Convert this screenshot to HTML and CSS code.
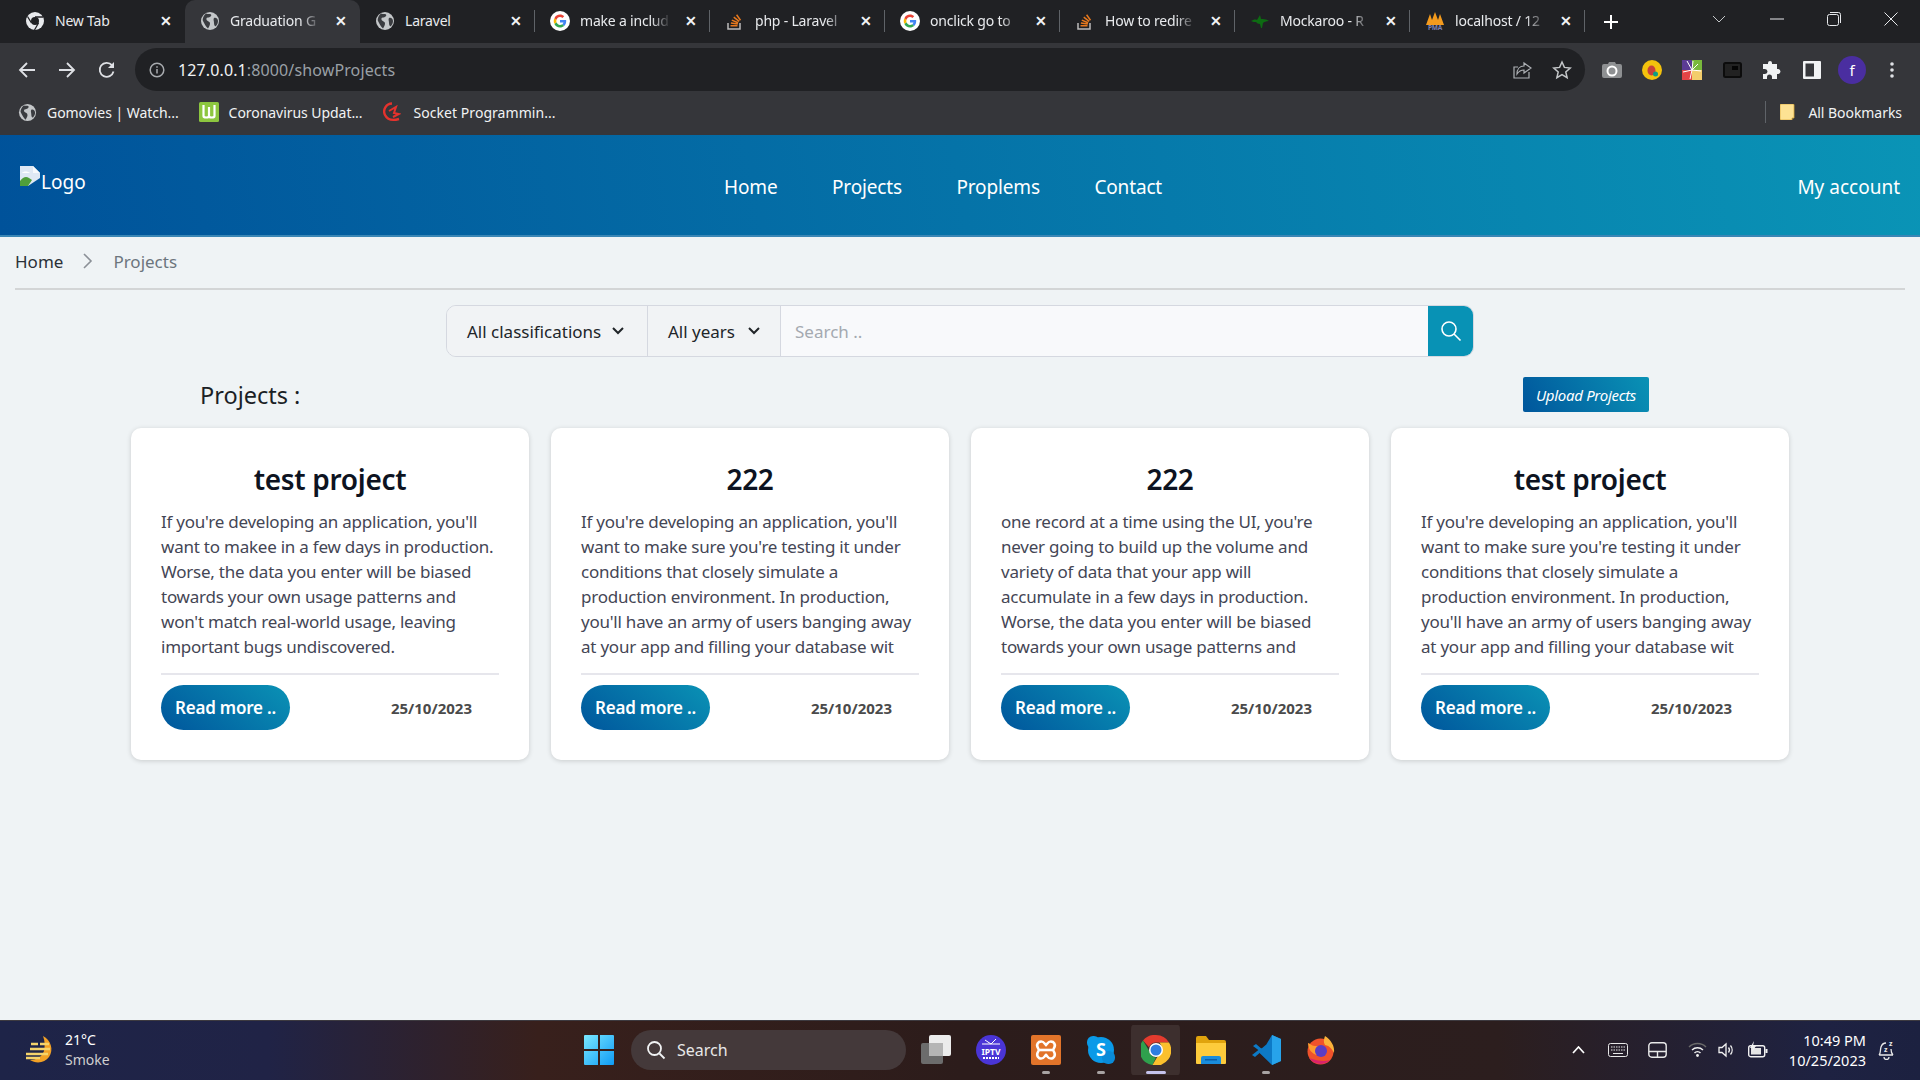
FILE: index.html
```html
<!DOCTYPE html>
<html lang="en">
<head>
    <meta charset="UTF-8">
    <meta name="viewport" content="width=device-width, initial-scale=1.0">
    <title>Projects</title>
    <link rel="stylesheet" href="styles.css">
</head>
<body>

    <svg class="sprites" width="0" height="0">
        <symbol id="globe" viewBox="0 0 20 20">
            <circle cx="10" cy="10" r="9" fill="#c4c7c9"/>
            <path d="M6 2.500c2 1 4 0 5 1s-1 3-3 3-2 2-1 3 3 1 3 3-1 3-2 5C6 16 4 12 3 10s1-6 3-7.500zM14 7c2-1 4 1 4 3s-1 4-2 5-2-1-2-3-1-4 0-5z" fill="#3a3c40"/>
        </symbol>
        <symbol id="google" viewBox="0 0 20 20">
            <circle cx="10" cy="10" r="10" fill="#fff"/>
            <path d="M16.200 10.200c0-.5 0-.9-.1-1.300H10v2.500h3.500c-.2.800-.6 1.500-1.300 1.900l2 1.600c1.200-1.100 2-2.800 2-4.700z" fill="#4285f4"/>
            <path d="M10 16.400c1.700 0 3.100-.6 4.200-1.500l-2-1.600c-.6.400-1.300.6-2.200.6-1.700 0-3-1.100-3.500-2.600l-2.100 1.600c1 2.100 3.100 3.500 5.600 3.500z" fill="#34a853"/>
            <path d="M6.500 11.300c-.3-.8-.3-1.700 0-2.500L4.400 7.200c-.9 1.700-.9 3.900 0 5.600z" fill="#fbbc05"/>
            <path d="M10 6.100c.9 0 1.800.3 2.400.9l1.800-1.800C13.100 4.200 11.700 3.600 10 3.600c-2.500 0-4.600 1.400-5.600 3.600l2.100 1.600C7 7.300 8.300 6.100 10 6.100z" fill="#ea4335"/>
        </symbol>
        <symbol id="stack" viewBox="0 0 20 20">
            <path d="M3 12v6h12v-6" fill="none" stroke="#bcbbbb" stroke-width="1.500"/>
            <path d="M5.500 15.500h7v-1.500h-7zM5.800 12.700l6.900 1 .2-1.500-6.900-1zM6.500 9.800l6.300 2.700.6-1.400-6.300-2.700zM8.300 6.800l5.400 4.200.9-1.200-5.400-4.200zM11 4.200l3.900 5.500 1.200-.9L12.200 3.300z" fill="#e8791e"/>
        </symbol>
    </svg>

    <div class="tab-strip">
        <div class="tab">
            <svg class="fav" width="20" height="20" viewBox="0 0 20 20"><circle cx="10" cy="10" r="9" fill="#e8eaed"/><circle cx="10" cy="10" r="4" fill="#202124"/><path d="M10 6h8M6.500 12L2.500 5.500M13.500 12L9.500 19" stroke="#202124" stroke-width="1.300"/></svg>
            <span class="tab-title">New Tab</span><span class="tab-x">✕</span>
        </div>
        <div class="tab tab-active">
            <svg class="fav" width="20" height="20"><use href="#globe"/></svg>
            <span class="tab-title fade">Graduation G</span><span class="tab-x">✕</span>
        </div>
        <div class="tab sep">
            <svg class="fav" width="20" height="20"><use href="#globe"/></svg>
            <span class="tab-title">Laravel</span><span class="tab-x">✕</span>
        </div>
        <div class="tab sep">
            <svg class="fav" width="20" height="20"><use href="#google"/></svg>
            <span class="tab-title fade">make a includ</span><span class="tab-x">✕</span>
        </div>
        <div class="tab sep">
            <svg class="fav" width="20" height="20"><use href="#stack"/></svg>
            <span class="tab-title fade">php - Laravel</span><span class="tab-x">✕</span>
        </div>
        <div class="tab sep">
            <svg class="fav" width="20" height="20"><use href="#google"/></svg>
            <span class="tab-title fade">onclick go to</span><span class="tab-x">✕</span>
        </div>
        <div class="tab sep">
            <svg class="fav" width="20" height="20"><use href="#stack"/></svg>
            <span class="tab-title fade">How to redire</span><span class="tab-x">✕</span>
        </div>
        <div class="tab sep">
            <svg class="fav" width="20" height="20" viewBox="0 0 20 20"><path d="M1 10c2-1 4-2 6-1l3-5 1 4c2 0 5 0 8 2-3 0-5 1-6 2l-1 5h-1l-1-4c-2 0-3-1-4-2-2 0-3 0-5-1z" fill="#0d6b12"/></svg>
            <span class="tab-title fade">Mockaroo - R</span><span class="tab-x">✕</span>
        </div>
        <div class="tab sep">
            <svg class="fav" width="20" height="20" viewBox="0 0 20 20"><path d="M1 14L5 3l2 6 3-8 3 8 2-6 4 11z" fill="#f39a1d"/><text x="10" y="18.500" class="pma-text">PMA</text></svg>
            <span class="tab-title fade">localhost / 12</span><span class="tab-x">✕</span>
        </div>
        <svg class="new-tab" width="18" height="18" viewBox="0 0 18 18"><path d="M9 2v14M2 9h14" stroke="#fff" stroke-width="2"/></svg>
        <div class="win-controls">
            <svg class="win-chevron" width="14" height="8" viewBox="0 0 14 8"><path d="M1 1l6 6 6-6" fill="none" stroke="#c4c7c9"/></svg>
            <svg width="14" height="14" viewBox="0 0 14 14"><path d="M0 7h14" stroke="#e8eaed"/></svg>
            <svg width="14" height="14" viewBox="0 0 14 14"><rect x=".5" y="2.500" width="11" height="11" rx="2" fill="none" stroke="#e8eaed"/><path d="M3 .5h8.500a2 2 0 0 1 2 2V11" fill="none" stroke="#e8eaed"/></svg>
            <svg width="14" height="14" viewBox="0 0 14 14"><path d="M.5.5l13 13M13.500.5l-13 13" stroke="#e8eaed"/></svg>
        </div>
    </div>

    <div class="toolbar">
        <div class="tool"><svg width="18" height="18" viewBox="0 0 18 18"><path d="M17 9H2M9 2L2 9l7 7" fill="none" stroke="#dfe1e5" stroke-width="1.800"/></svg></div>
        <div class="tool"><svg width="18" height="18" viewBox="0 0 18 18"><path d="M1 9h15M9 2l7 7-7 7" fill="none" stroke="#dfe1e5" stroke-width="1.800"/></svg></div>
        <div class="tool"><svg width="18" height="18" viewBox="0 0 18 18"><path d="M15.500 10.500A7 7 0 1 1 14 4.200" fill="none" stroke="#dfe1e5" stroke-width="1.800"/><path d="M16 1v6h-6z" fill="#dfe1e5"/></svg></div>
        <div class="address">
            <svg class="addr-info" width="16" height="16" viewBox="0 0 16 16"><circle cx="8" cy="8" r="6.800" fill="none" stroke="#a8abaf" stroke-width="1.500"/><path d="M8 7v4.500M8 4.200v1.600" stroke="#a8abaf" stroke-width="1.500"/></svg>
            <span class="url"><b>127.0.0.1</b>:8000/showProjects</span>
            <div class="tool"><svg width="20" height="20" viewBox="0 0 20 20"><path d="M17 12v6H2V7h4" fill="none" stroke="#aeb1b5" stroke-width="1.200"/><path d="M12 3l7 5-7 5v-3c-3 0-5 1-7 4 0-5 3-8 7-8z" fill="none" stroke="#aeb1b5" stroke-width="1.200"/></svg></div>
            <div class="tool"><svg width="20" height="20" viewBox="0 0 20 20"><path d="M10 2l2.400 5.400 5.800.6-4.400 3.900 1.300 5.800L10 14.700l-5.100 3 1.300-5.800L1.800 8l5.800-.6z" fill="none" stroke="#c4c7c9" stroke-width="1.500"/></svg></div>
        </div>
        <div class="extensions">
            <div class="tool"><svg width="20" height="18" viewBox="0 0 20 18"><path d="M2 3h4l1-2h6l1 2h4a2 2 0 0 1 2 2v10a2 2 0 0 1-2 2H2a2 2 0 0 1-2-2V5a2 2 0 0 1 2-2z" fill="#8e9092"/><circle cx="10" cy="10" r="4.500" fill="none" stroke="#fff" stroke-width="2"/></svg></div>
            <div class="tool"><svg width="20" height="20" viewBox="0 0 20 20"><circle cx="10" cy="10" r="10" fill="#f4c20d"/><ellipse cx="9.500" cy="10.500" rx="4" ry="5" fill="#c8423a"/><circle cx="13.500" cy="14" r="2.500" fill="#0f9d83"/></svg></div>
            <div class="tool"><svg width="20" height="20" viewBox="0 0 20 20"><rect width="10" height="10" fill="#5b3b94"/><rect x="10" width="10" height="10" fill="#79b93c"/><rect y="10" width="10" height="10" fill="#e34546"/><rect x="10" y="10" width="10" height="10" fill="#f3cd6b"/><path d="M10 10L5 1M10 10l1-9M10 10l6-6M10 10l-9 2M10 10l9 1M10 10l-2 9" stroke="#fff"/></svg></div>
            <div class="tool"><svg width="19" height="16" viewBox="0 0 19 16"><rect x="1" y="1" width="17" height="14" rx="1.500" fill="#222" stroke="#0c0c0c" stroke-width="2"/><rect x="9" y="4" width="6" height="4" fill="#050505"/></svg></div>
            <div class="tool"><svg width="20" height="20" viewBox="0 0 20 20"><path d="M8 1a2 2 0 0 1 2 2v1h5v5h1a2.500 2.500 0 0 1 0 5h-1v5H10v-2a2.500 2.500 0 0 0-5 0v2H1v-5h2a2.500 2.500 0 0 0 0-5H1V4h5V3a2 2 0 0 1 2-2z" fill="#f1f3f4"/></svg></div>
            <div class="tool"><svg width="18" height="18" viewBox="0 0 18 18"><rect width="18" height="18" rx="1" fill="#f1f3f4"/><rect x="2.500" y="2.500" width="8.500" height="13" fill="#35363a"/></svg></div>
            <div class="tool"><span class="avatar">f</span></div>
            <div class="tool"><svg width="4" height="16" viewBox="0 0 4 16"><circle cx="2" cy="2" r="1.800" fill="#dfe1e5"/><circle cx="2" cy="8" r="1.800" fill="#dfe1e5"/><circle cx="2" cy="14" r="1.800" fill="#dfe1e5"/></svg></div>
        </div>
    </div>

    <div class="bookmarks">
        <div class="bookmark"><svg width="19" height="19"><use href="#globe"/></svg>Gomovies | Watch...</div>
        <div class="bookmark"><svg width="20" height="20" viewBox="0 0 20 20"><rect width="20" height="20" rx="1.500" fill="#8cc63f"/><path d="M4.500 3v11c0 2 5.500 2 5.500 0V5m0 9c0 2 5.500 2 5.500 0V3" fill="none" stroke="#fff" stroke-width="2.200"/></svg>Coronavirus Updat...</div>
        <div class="bookmark wide"><svg width="18" height="20" viewBox="0 0 18 20"><path d="M9 1.500a8 8 0 0 0-7 11.500c2 4 7 6 14 4" fill="none" stroke="#e5322d" stroke-width="2.400"/><path d="M6 9l7-4-2 6 5 1-6 3" fill="none" stroke="#e5322d" stroke-width="2"/></svg>Socket Programmin...</div>
        <div class="all-bookmarks">
            <svg width="15" height="16" viewBox="0 0 15 16"><path d="M0 1a1 1 0 0 1 1-1h12a1 1 0 0 1 1 1v13h-2v2H1a1 1 0 0 1-1-1z" fill="#fde293" stroke="#d9a93a" stroke-width=".8"/></svg>All Bookmarks
        </div>
    </div>

    <header class="site-header">
        <a class="logo"><svg width="20" height="20" viewBox="0 0 20 20"><path d="M0 0h13l7 7v5L8 20H0z" fill="#dfe8f4"/><path d="M13 0v7h7z" fill="#f7f9fc"/><path d="M2 7c1-2 6-2 8 0z" fill="#fff"/><path d="M0 20v-5c3-4 6-5 9-3l3 2-4 6z" fill="#4f9e3a"/></svg><span class="logo-alt">Logo</span></a>
        <nav class="main-nav">
            <a>Home</a>
            <a>Projects</a>
            <a>Proplems</a>
            <a>Contact</a>
        </nav>
        <a class="account">My account</a>
    </header>

    <main class="content">
        <div class="breadcrumb">
            <span class="crumb-home">Home</span>
            <svg width="12" height="16" viewBox="0 0 12 16"><path d="M2 1l7 7-7 7" fill="none" stroke="#8b9097" stroke-width="1.600"/></svg>
            <span class="crumb-current">Projects</span>
        </div>

        <div class="search-bar">
            <div class="filter filter-class">All classifications
                <svg width="12" height="8" viewBox="0 0 12 8"><path d="M1 1l5 5 5-5" fill="none" stroke="#212529" stroke-width="2"/></svg>
            </div>
            <div class="filter filter-year">All years
                <svg width="12" height="8" viewBox="0 0 12 8"><path d="M1 1l5 5 5-5" fill="none" stroke="#212529" stroke-width="2"/></svg>
            </div>
            <div class="search-input">Search ..</div>
            <div class="search-btn"><svg width="22" height="22" viewBox="0 0 22 22"><circle cx="9" cy="9" r="7" fill="none" stroke="#fff" stroke-width="1.600"/><path d="M14 14l6.500 6.500" stroke="#fff" stroke-width="1.600"/></svg></div>
        </div>

        <div class="projects-head">
            <h2>Projects :</h2>
            <a class="upload-btn">Upload Projects</a>
        </div>

        <div class="cards">
            <div class="card">
                <h3>test project</h3>
                <p>If you're developing an application, you'll<br>want to makee in a few days in production.<br>Worse, the data you enter will be biased<br>towards your own usage patterns and<br>won't match real-world usage, leaving<br>important bugs undiscovered.</p>
                <div class="card-foot"><a class="read-more">Read more ..</a><span class="date">25/10/2023</span></div>
            </div>
            <div class="card">
                <h3>222</h3>
                <p>If you're developing an application, you'll<br>want to make sure you're testing it under<br>conditions that closely simulate a<br>production environment. In production,<br>you'll have an army of users banging away<br>at your app and filling your database wit</p>
                <div class="card-foot"><a class="read-more">Read more ..</a><span class="date">25/10/2023</span></div>
            </div>
            <div class="card">
                <h3>222</h3>
                <p>one record at a time using the UI, you're<br>never going to build up the volume and<br>variety of data that your app will<br>accumulate in a few days in production.<br>Worse, the data you enter will be biased<br>towards your own usage patterns and</p>
                <div class="card-foot"><a class="read-more">Read more ..</a><span class="date">25/10/2023</span></div>
            </div>
            <div class="card">
                <h3>test project</h3>
                <p>If you're developing an application, you'll<br>want to make sure you're testing it under<br>conditions that closely simulate a<br>production environment. In production,<br>you'll have an army of users banging away<br>at your app and filling your database wit</p>
                <div class="card-foot"><a class="read-more">Read more ..</a><span class="date">25/10/2023</span></div>
            </div>
        </div>
    </main>

    <footer class="taskbar">
        <div class="weather">
            <svg width="30" height="30" viewBox="0 0 30 30"><path d="M18 1c8 4 11 14 6 21-4 6-13 7-19 3 6 0 12-3 14-9 1-5 1-10-1-15z" fill="#f2a125"/><path d="M6 9h7M15 9h9M1 19h22M5 14h20M1 23h14" stroke="#f5d36b" stroke-width="2.500"/></svg>
            <div class="weather-text"><span class="temp">21°C</span><span class="sky">Smoke</span></div>
        </div>
        <div class="task-center">
            <svg class="start" width="30" height="30" viewBox="0 0 30 30"><defs><linearGradient id="win" x1="0" y1="0" x2="1" y2="1"><stop offset="0" stop-color="#7ae8ff"/><stop offset="1" stop-color="#0f9bf5"/></linearGradient></defs><path d="M0 1a1 1 0 0 1 1-1h13v14H0zM16 0h13a1 1 0 0 1 1 1v13H16zM0 16h14v14H1a1 1 0 0 1-1-1zM16 16h14v13a1 1 0 0 1-1 1H16z" fill="url(#win)"/></svg>
            <div class="task-search">
                <svg width="20" height="20" viewBox="0 0 20 20"><circle cx="8.500" cy="8.500" r="6.500" fill="none" stroke="#f1f3f4" stroke-width="1.800"/><path d="M13.500 13.500l5 5" stroke="#f1f3f4" stroke-width="1.800"/></svg>
                <span>Search</span>
            </div>
            <div class="task-icon"><svg width="30" height="30" viewBox="0 0 30 30"><rect y="8" width="22" height="21" rx="2" fill="#6c6c6c"/><rect x="8" width="22" height="21" rx="2" fill="#ececec"/><rect x="8" y="8" width="14" height="13" fill="#b5b5b5"/></svg></div>
            <div class="task-icon"><svg width="30" height="30" viewBox="0 0 30 30"><circle cx="15" cy="15" r="15" fill="#4a35d6"/><path d="M9 5l6 4 5-5M6 9h18" stroke="#fff" fill="none"/><text x="15" y="20" class="iptv-text">IPTV</text><path d="M7 23h16" stroke="#fff" stroke-width="2" stroke-dasharray="2 1"/></svg></div>
            <div class="task-icon running"><svg width="30" height="30" viewBox="0 0 30 30"><rect width="30" height="30" rx="2" fill="#e2742a"/><path d="M8 7c4-2 5 1 7 3 2-2 3-5 7-3 4 3 1 6 0 8 1 2 4 5 0 8-4 2-5-1-7-3-2 2-3 5-7 3-4-3-1-6 0-8-1-2-4-5 0-8z" fill="none" stroke="#fff" stroke-width="2.600"/><path d="M9 15h12" stroke="#fff" stroke-width="2.600"/></svg></div>
            <div class="task-icon running"><svg width="28" height="28" viewBox="0 0 28 28"><circle cx="14" cy="14" r="13" fill="#0a9ae8"/><rect x="0" y="0" width="13" height="13" rx="6" fill="#0a9ae8"/><rect x="15" y="15" width="13" height="13" rx="6" fill="#0a8bd8"/><text x="14" y="20" class="skype-text">S</text></svg></div>
            <div class="task-icon active"><svg width="30" height="30" viewBox="0 0 30 30"><path d="M15 0a15 15 0 0 1 13 7.500H15a7.500 7.500 0 0 0-7 4.800L2 5.500A15 15 0 0 1 15 0z" fill="#e33b2e"/><path d="M2 5.500l6.500 11a7.500 7.500 0 0 0 6.500 6L11.500 30A15 15 0 0 1 2 5.500z" fill="#2fa04d"/><path d="M28 7.500A15 15 0 0 1 11.500 30l6.800-11.500a7.500 7.500 0 0 0 0-11z" fill="#fbc02d"/><circle cx="15" cy="15" r="7" fill="#fff"/><circle cx="15" cy="15" r="5.500" fill="#2f7de1"/></svg></div>
            <div class="task-icon"><svg width="30" height="28" viewBox="0 0 30 28"><path d="M0 2a2 2 0 0 1 2-2h8l3 4h15a2 2 0 0 1 2 2v2H0z" fill="#e0a30d"/><path d="M0 7h30v20a1 1 0 0 1-1 1H1a1 1 0 0 1-1-1z" fill="#fdcb3c"/><path d="M5 28v-6a2 2 0 0 1 2-2h16a2 2 0 0 1 2 2v6z" fill="#1a8ddc"/><rect x="9" y="23" width="12" height="1.500" fill="#0b5ea8"/></svg></div>
            <div class="task-icon running"><svg width="30" height="30" viewBox="0 0 30 30"><path d="M21 0l9 4v22l-9 4L7 16.500 22 4v22L2 11l3-2 7 6z" fill="#0d7ac6"/><path d="M21 0l9 4v22l-9 4z" fill="#27a3ea"/><path d="M1 20l3 2 8-7-2-2z" fill="#0d7ac6"/></svg></div>
            <div class="task-icon"><svg width="30" height="30" viewBox="0 0 30 30"><circle cx="14.500" cy="16.500" r="13" fill="#f0522b"/><path d="M19 1c6 4 10 10 9 17-2-4-4-7-9-8-2-3-1-6 0-9z" fill="#fbb23a"/><path d="M2 8c2 0 3 3 7 3 5 0 9 0 11 4-2-1-4 0-4 2-3-1-5 0-5 3-5-1-9-6-9-12z" fill="#ff9a2e"/><circle cx="15" cy="16" r="6" fill="#5b3dc4"/><path d="M3 23c5 7 15 8 21 2-6 2-12 1-21-2z" fill="#d9236b"/></svg></div>
        </div>
        <div class="tray">
            <svg class="tray-chevron" width="13" height="8" viewBox="0 0 13 8"><path d="M1 7l5.500-6L12 7" fill="none" stroke="#fff" stroke-width="1.700"/></svg>
            <svg class="tray-kbd" width="20" height="14" viewBox="0 0 20 14"><rect x=".5" y=".5" width="19" height="13" rx="2" fill="none" stroke="#e8e8e8"/><path d="M3 4h14M3 7h14" stroke="#e8e8e8" stroke-dasharray="1.500 1"/><path d="M5 10.500h10" stroke="#e8e8e8"/></svg>
            <svg class="tray-pad" width="19" height="16" viewBox="0 0 19 16"><rect x=".8" y=".8" width="17.400" height="14.400" rx="3" fill="none" stroke="#e8e8e8" stroke-width="1.400"/><path d="M1 9.500h17M9.500 9.500V15" stroke="#e8e8e8" stroke-width="1.400"/></svg>
            <svg class="tray-wifi" width="19" height="15" viewBox="0 0 19 15"><path d="M1 5a12 12 0 0 1 17 0" fill="none" stroke="#6a6a6a" stroke-width="1.400"/><path d="M4 8a8 8 0 0 1 11 0M6.500 11a4 4 0 0 1 6 0" fill="none" stroke="#f1f1f1" stroke-width="1.400"/><circle cx="9.500" cy="13.500" r="1.400" fill="#f1f1f1"/></svg>
            <svg class="tray-vol" width="17" height="16" viewBox="0 0 17 16"><path d="M1 5.500h3L8 2v12L4 10.500H1z" fill="none" stroke="#f1f1f1" stroke-width="1.300"/><path d="M10.500 5.500a4 4 0 0 1 0 5M12.500 3.500a7 7 0 0 1 0 9" fill="none" stroke="#f1f1f1" stroke-width="1.300"/></svg>
            <svg class="tray-bat" width="20" height="17" viewBox="0 0 20 17"><rect x=".7" y="4.700" width="16" height="11" rx="2" fill="none" stroke="#f1f1f1" stroke-width="1.400"/><rect x="3" y="7" width="10" height="6.500" fill="#e4e4e4"/><rect x="17.500" y="8" width="2" height="4" fill="#f1f1f1"/><path d="M6 0L2 7h3l-1 4 4-6H5z" fill="#f1f1f1"/></svg>
            <div class="clock"><span>10:49 PM</span><span>10/25/2023</span></div>
            <svg class="tray-bell" width="18" height="20" viewBox="0 0 18 20"><path d="M2 15c2-2 1-5 2-8s3-4 5-4M16 15H2M7 17a2.500 2.500 0 0 0 5 0M14 9c0 2 0 4 2 6" fill="none" stroke="#e8e8e8" stroke-width="1.300"/><text x="7" y="12" class="zz-text">z</text><text x="12" y="6" class="zz-text">z</text></svg>
        </div>
    </footer>

</body>
</html>
```

FILE: styles.css
```css
* {
    box-sizing: border-box;
}

body {
    display: flex;
    flex-direction: column;
    width: 1920px;
    height: 1080px;
    margin: 0;
    overflow: hidden;
    font-family: "Noto Sans", "Open Sans", sans-serif;
    background-color: #eff3f5;
}

.sprites {
    position: absolute;
}

/* browser tabs */
.tab-strip {
    display: flex;
    align-items: center;
    flex: none;
    height: 43px;
    padding-left: 10px;
    background-color: #202124;
    color: #e8eaed;
    font-size: 14px;
    letter-spacing: -0.2px;
}

.tab {
    position: relative;
    display: flex;
    align-items: center;
    width: 175px;
    height: 43px;
    padding: 0 0 2px 15px;
}

.tab.sep::after {
    content: "";
    position: absolute;
    right: 0;
    top: 10px;
    height: 22px;
    border-right: 1px solid #5f6368;
}

.tab-active {
    background-color: #35363a;
    border-radius: 10px 10px 0 0;
}

.tab-title {
    width: 91px;
    margin-left: 10px;
    overflow: hidden;
    white-space: nowrap;
}

.tab-title.fade {
    -webkit-mask-image: linear-gradient(to right, #000 78%, transparent 100%);
    mask-image: linear-gradient(to right, #000 78%, transparent 100%);
}

.tab-x {
    width: 14px;
    margin-left: 14px;
    font-size: 14px;
    font-weight: 700;
    color: #f1f3f4;
    letter-spacing: 0;
}

.pma-text {
    font-size: 6.500px;
    font-weight: 700;
    fill: #7c82b5;
    text-anchor: middle;
}

.new-tab {
    margin-left: 17px;
}

.win-controls {
    display: flex;
    align-items: center;
    gap: 43px;
    margin-left: 92px;
    padding-bottom: 6px;
}

.win-chevron {
    margin-right: 1px;
}

/* address bar row */
.toolbar {
    display: flex;
    align-items: center;
    flex: none;
    height: 48px;
    padding: 5px 0 0 7px;
    background-color: #35363a;
}

.tool {
    display: flex;
    align-items: center;
    justify-content: center;
    flex: none;
    width: 40px;
    height: 40px;
}

.address {
    display: flex;
    align-items: center;
    width: 1450px;
    height: 43px;
    margin-left: 8px;
    padding: 0 3px 0 14px;
    background-color: #202124;
    border-radius: 22px;
}

.addr-info {
    flex: none;
}

.url {
    flex: 1;
    margin-left: 13px;
    font-size: 16px;
    letter-spacing: 0.12px;
    color: #9aa0a6;
}

.url b {
    font-weight: 400;
    color: #f1f3f4;
}

.extensions {
    display: flex;
    margin-left: 7px;
}

.avatar {
    display: flex;
    align-items: center;
    justify-content: center;
    width: 28px;
    height: 28px;
    border-radius: 50%;
    background-color: #4a2ea0;
    color: #fff;
    font-size: 15px;
}

/* bookmarks row */
.bookmarks {
    display: flex;
    align-items: center;
    flex: none;
    height: 44px;
    padding: 0 0 2px 18px;
    background-color: #35363a;
    color: #f1f3f4;
    font-size: 14px;
    letter-spacing: -0.05px;
}

.bookmark {
    display: flex;
    align-items: center;
    gap: 10px;
    margin-right: 20px;
    white-space: nowrap;
}

.bookmark.wide {
    gap: 13px;
    letter-spacing: 0.05px;
}

.all-bookmarks {
    display: flex;
    align-items: center;
    gap: 13px;
    margin-left: auto;
    margin-right: 18px;
    padding-left: 14px;
    border-left: 1px solid #5f6368;
    height: 22px;
}

/* site header */
.site-header {
    display: flex;
    flex: none;
    height: 102px;
    padding: 0 20px;
    background: linear-gradient(80deg, #00529a 0%, #0a94b6 100%);
    border-bottom: 2px solid #3a86b5;
    color: #fff;
    font-size: 19px;
}

.logo {
    display: flex;
    align-items: flex-start;
    width: 704px;
    padding-top: 31px;
}

.logo-alt {
    margin-top: 3px;
    margin-left: 1px;
}

.main-nav {
    display: flex;
    gap: 54.500px;
    padding-top: 39px;
    letter-spacing: -0.15px;
}

.account {
    margin-left: auto;
    padding-top: 39px;
}

/* page content */
.content {
    flex: 1;
    padding: 0 15px;
}

.breadcrumb {
    display: flex;
    align-items: center;
    gap: 19px;
    height: 53px;
    padding-bottom: 3px;
    border-bottom: 2px solid #d3d5d6;
    font-size: 17px;
}

.crumb-home {
    color: #2b3038;
}

.crumb-current {
    color: #6c757d;
}

.search-bar {
    display: flex;
    width: 1028px;
    height: 52px;
    margin: 15px auto 0;
    border: 1px solid #d5d8e0;
    border-radius: 10px;
    font-size: 17px;
    color: #212529;
    overflow: hidden;
}

.filter {
    display: flex;
    align-items: center;
    justify-content: space-between;
    background-color: #f1f3f5;
    border-right: 1px solid #d5d8e0;
    padding: 0 20px;
}

.filter-class {
    width: 201px;
    padding-right: 23px;
}

.filter-year {
    width: 133px;
}

.search-input {
    display: flex;
    align-items: center;
    flex: 1;
    padding-left: 14px;
    background-color: #f8f9fb;
    color: #a4a9b0;
}

.search-btn {
    display: flex;
    align-items: center;
    justify-content: center;
    width: 45px;
    background-color: #0892b5;
}

.projects-head {
    display: flex;
    align-items: center;
    justify-content: space-between;
    height: 35px;
    margin-top: 20px;
    padding: 0 256px 0 185px;
}

.projects-head h2 {
    margin: 0;
    font-size: 23.500px;
    font-weight: 400;
    color: #1b1f26;
}

.upload-btn {
    display: flex;
    align-items: center;
    justify-content: center;
    width: 126px;
    height: 35px;
    background: linear-gradient(60deg, #00569c, #0a92b5);
    border-radius: 2px;
    color: #fff;
    font-size: 15px;
    font-style: italic;
    letter-spacing: -0.3px;
}

.cards {
    display: grid;
    grid-template-columns: repeat(4, 398px);
    gap: 22px;
    margin-top: 16px;
    padding-left: 116px;
}

.card {
    display: flex;
    flex-direction: column;
    height: 332px;
    padding: 30px 30px 0;
    background-color: #fff;
    border-radius: 10px;
    box-shadow: 0 1px 5px rgba(0, 0, 0, 0.16);
}

.card h3 {
    margin: 0;
    font-size: 28px;
    line-height: 42px;
    font-weight: 600;
    letter-spacing: -0.3px;
    text-align: center;
    color: #0d1321;
}

.card p {
    height: 166px;
    margin: 9px 0 0;
    border-bottom: 2px solid #e6e6ec;
    font-size: 17px;
    line-height: 25px;
    letter-spacing: -0.23px;
    white-space: nowrap;
    color: #444655;
}

.card-foot {
    display: flex;
    align-items: center;
    justify-content: space-between;
    margin-top: 10px;
    padding-right: 27px;
}

.read-more {
    display: flex;
    align-items: center;
    justify-content: center;
    width: 129px;
    height: 45px;
    background: linear-gradient(40deg, #00569c, #0a92b5);
    border-radius: 23px;
    color: #fff;
    font-size: 17px;
    font-weight: 600;
    letter-spacing: -0.2px;
}

.date {
    font-size: 15px;
    font-weight: 700;
    color: #4a4a4a;
}

/* windows taskbar */
.taskbar {
    display: grid;
    grid-template-columns: 584px 1fr auto;
    align-items: center;
    flex: none;
    height: 60px;
    padding-bottom: 2px;
    background: linear-gradient(to right, #1e2448 0%, #202346 14%, #38201c 28%, #2c1c1b 50%, #2c1e1e 78%, #1e2242 95%, #1c2140 100%);
    border-top: 1px solid #3d3a40;
    color: #fff;
}

.weather {
    display: flex;
    align-items: center;
    gap: 10px;
    padding-left: 25px;
}

.weather-text {
    display: flex;
    flex-direction: column;
    font-size: 14px;
    line-height: 20px;
}

.sky {
    color: #cfcfcf;
}

.task-center {
    display: flex;
    align-items: center;
}

.task-search {
    display: flex;
    align-items: center;
    gap: 11px;
    width: 275px;
    height: 40px;
    margin: 0 2px 0 17px;
    padding-left: 15px;
    background-color: #44393a;
    border-radius: 20px;
    font-size: 16px;
    color: #e8e8e8;
}

.task-icon {
    position: relative;
    display: flex;
    align-items: center;
    justify-content: center;
    width: 55px;
    height: 50px;
}

.task-icon.running::after,
.task-icon.active::after {
    content: "";
    position: absolute;
    left: 50%;
    bottom: 1px;
    width: 8px;
    height: 3px;
    margin-left: -4px;
    border-radius: 2px;
    background-color: #a8a3a3;
}

.task-icon.active {
    background-color: #3d2f2e;
    background-clip: content-box;
    padding: 0 3px;
    border-radius: 5px;
}

.task-icon.active::after {
    width: 20px;
    margin-left: -10px;
    background-color: #c5c3ec;
}

.iptv-text {
    font-size: 8.500px;
    font-weight: 700;
    fill: #fff;
    text-anchor: middle;
}

.skype-text {
    font-size: 18px;
    font-weight: 700;
    fill: #fff;
    text-anchor: middle;
}

.zz-text {
    font-size: 7px;
    font-weight: 700;
    fill: #e8e8e8;
}

.tray {
    display: flex;
    align-items: center;
    padding-right: 25px;
}

.tray-kbd {
    margin-left: 23px;
}

.tray-pad {
    margin-left: 20px;
}

.tray-wifi {
    margin-left: 21px;
}

.tray-vol {
    margin-left: 11px;
}

.tray-bat {
    margin-left: 13px;
}

.clock {
    display: flex;
    flex-direction: column;
    align-items: flex-end;
    width: 98px;
    font-size: 14.500px;
    line-height: 20px;
}

.tray-bell {
    margin-left: 11px;
}
```
